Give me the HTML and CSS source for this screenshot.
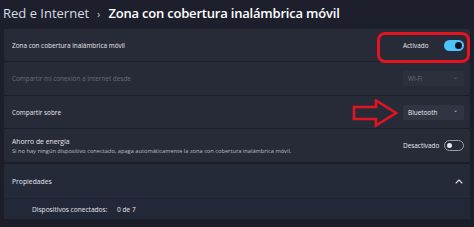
FILE: index.html
```html
<!DOCTYPE html>
<html lang="es">
<head>
<meta charset="utf-8">
<title>Zona con cobertura inalámbrica móvil</title>
<link rel="stylesheet" href="styles.css">
</head>
<body>
<div class="page">
  <header class="title">
    <span class="crumb">Red e Internet</span>
    <span class="sep">›</span>
    <span class="current">Zona con cobertura inalámbrica móvil</span>
  </header>

  <section class="group">
    <div class="row r1">
      <span class="label">Zona con cobertura inalámbrica móvil</span>
      <div class="control">
        <span class="state">Activado</span>
        <span class="toggle on"><span class="knob"></span></span>
      </div>
    </div>
    <div class="row r2">
      <span class="label disabled">Compartir mi conexión a Internet desde</span>
      <div class="select disabled"><span>Wi-Fi</span><span class="chev">⌄</span></div>
    </div>
    <div class="row r3">
      <span class="label">Compartir sobre</span>
      <div class="select"><span>Bluetooth</span><span class="chev">⌄</span></div>
    </div>
    <div class="row r4">
      <div class="stack">
        <span class="label">Ahorro de energía</span>
        <span class="desc">Si no hay ningún dispositivo conectado, apaga automáticamente la zona con cobertura inalámbrica móvil.</span>
      </div>
      <div class="control">
        <span class="state">Desactivado</span>
        <span class="toggle off"><span class="knob"></span></span>
      </div>
    </div>
  </section>

  <section class="expander">
    <div class="exp-head">
      <span class="label">Propiedades</span>
      <svg class="caret" width="8" height="5" viewBox="0 0 8 5"><path d="M1 4 L4 1 L7 4" fill="none" stroke="#d8dbe3" stroke-width="1.1" stroke-linecap="round" stroke-linejoin="round"/></svg>
    </div>
    <div class="exp-body">
      <span class="prop-key">Dispositivos conectados:</span>
      <span class="prop-val">0 de 7</span>
    </div>
  </section>

  <div class="highlight"></div>
  <svg class="arrow" width="50" height="30" viewBox="0 0 50 30">
    <path d="M2 8 L24 8 L24 1.5 L44 14 L24 26.5 L24 20 L2 20 Z" fill="none" stroke="#e3141f" stroke-width="2.6" stroke-linejoin="miter"/>
  </svg>
</div>
</body>
</html>
```

FILE: styles.css
```css
html, body {
  margin: 0;
  padding: 0;
}
body {
  background: #1b1e29;
  font-family: "Open Sans", "Noto Sans", sans-serif;
  color: #e6e8ee;
  width: 474px;
  height: 227px;
  overflow: hidden;
}
.page {
  position: relative;
  height: 227px;
  background: linear-gradient(#1d202c, #1b1e29);
}
.title {
  display: flex;
  align-items: center;
  height: 26px;
  padding: 0 0 2px 3px;
  font-size: 13px;
  white-space: nowrap;
}
.crumb {
  color: #d9dce4;
  font-weight: 400;
}
.sep {
  color: #c9ccd5;
  margin: 0 8px 0 8px;
  font-size: 11px;
}
.current {
  color: #ffffff;
  font-weight: 600;
  letter-spacing: -0.2px;
}
.group {
  margin: 1px 4px 0 4px;
  display: flex;
  flex-direction: column;
  gap: 1px;
}
.row {
  display: flex;
  align-items: center;
  justify-content: space-between;
  padding: 0 6px 0 8px;
  background: #272b38;
  border-radius: 2px;
}
.r1 { height: 32px; }
.r2 { height: 33px; }
.r3 { height: 32px; }
.r4 { height: 33px; }
.label {
  font-size: 6.4px;
  color: #e4e6ec;
  white-space: nowrap;
}
.label.disabled {
  color: #686c78;
}
.stack {
  display: flex;
  flex-direction: column;
  gap: 1px;
}
.stack .label {
  font-size: 6.8px;
}
.desc {
  font-size: 5.7px;
  color: #b9bcc6;
  white-space: nowrap;
}
.control {
  display: flex;
  align-items: center;
}
.state {
  width: 41px;
  font-size: 6.4px;
  color: #e8eaf0;
  white-space: nowrap;
}
.toggle {
  width: 20px;
  height: 11px;
  border-radius: 6px;
  box-sizing: border-box;
  display: flex;
  align-items: center;
}
.toggle.on {
  background: #4cc2ff;
  justify-content: flex-end;
  padding-right: 2px;
}
.toggle.on .knob {
  width: 7px;
  height: 7px;
  border-radius: 50%;
  background: #10131c;
}
.toggle.off {
  border: 1px solid #9a9ea9;
  justify-content: flex-start;
  padding-left: 2px;
}
.toggle.off .knob {
  width: 5px;
  height: 5px;
  border-radius: 50%;
  background: #e6e8ee;
}
.select {
  width: 61px;
  height: 15px;
  box-sizing: border-box;
  display: flex;
  align-items: center;
  justify-content: space-between;
  padding: 0 6px 0 5px;
  background: #313543;
  border-radius: 2px;
  font-size: 6.4px;
  color: #e8eaf0;
}
.select .chev {
  font-size: 6px;
  line-height: 1;
  position: relative;
  top: -2px;
  color: #c8cbd4;
}
.select.disabled {
  background: #2c303d;
  color: #6a6e7a;
}
.select.disabled .chev {
  color: #6a6e7a;
}
.expander {
  margin: 2px 4px 0 4px;
  background: #252a39;
  border-radius: 2px;
}
.exp-head {
  height: 34px;
  display: flex;
  align-items: center;
  justify-content: space-between;
  padding: 0 7px 0 8px;
  border-bottom: 1px solid #1f2331;
}
.exp-head .label {
  font-size: 6.8px;
}
.exp-body {
  height: 20px;
  display: flex;
  align-items: center;
  padding-left: 28px;
  background: #232838;
  font-size: 6.6px;
  color: #e4e6ec;
}
.prop-key {
  width: 85px;
}
.highlight {
  position: absolute;
  left: 377px;
  top: 32px;
  width: 93px;
  height: 31px;
  box-sizing: border-box;
  border: 3px solid #e3141f;
  border-radius: 8px;
}
.arrow {
  position: absolute;
  left: 352px;
  top: 99px;
}
```
